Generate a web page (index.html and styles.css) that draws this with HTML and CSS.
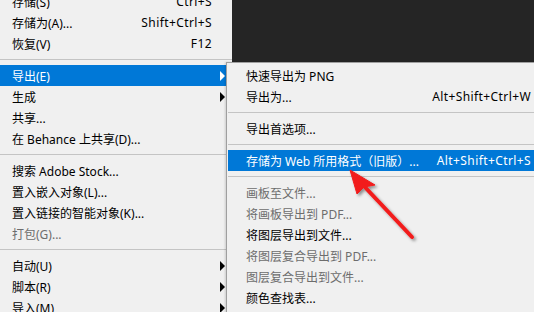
FILE: index.html
```html
<!DOCTYPE html>
<html lang="zh-CN">
<head>
    <meta charset="UTF-8">
    <title>文件菜单 - 导出</title>
    <link rel="stylesheet" href="styles.css">
</head>
<body>
    <div class="screen">
        <ul class="menu main-menu">
            <li class="item"><span class="label">存储(S)</span><span class="key">Ctrl+S</span><span class="sub"></span></li>
            <li class="item"><span class="label">存储为(A)...</span><span class="key">Shift+Ctrl+S</span><span class="sub"></span></li>
            <li class="item"><span class="label">恢复(V)</span><span class="key">F12</span><span class="sub"></span></li>
            <li class="sep"></li>
            <li class="item active"><span class="label">导出(E)</span><span class="key"></span><span class="sub"><i class="tri"></i></span></li>
            <li class="item"><span class="label">生成</span><span class="key"></span><span class="sub"><i class="tri"></i></span></li>
            <li class="item"><span class="label">共享...</span><span class="key"></span><span class="sub"></span></li>
            <li class="item"><span class="label">在 Behance 上共享(D)...</span><span class="key"></span><span class="sub"></span></li>
            <li class="sep"></li>
            <li class="item"><span class="label">搜索 Adobe Stock...</span><span class="key"></span><span class="sub"></span></li>
            <li class="item"><span class="label">置入嵌入对象(L)...</span><span class="key"></span><span class="sub"></span></li>
            <li class="item"><span class="label">置入链接的智能对象(K)...</span><span class="key"></span><span class="sub"></span></li>
            <li class="item disabled"><span class="label">打包(G)...</span><span class="key"></span><span class="sub"></span></li>
            <li class="sep"></li>
            <li class="item"><span class="label">自动(U)</span><span class="key"></span><span class="sub"><i class="tri"></i></span></li>
            <li class="item"><span class="label">脚本(R)</span><span class="key"></span><span class="sub"><i class="tri"></i></span></li>
            <li class="item"><span class="label">导入(M)</span><span class="key"></span><span class="sub"><i class="tri"></i></span></li>
        </ul>

        <ul class="menu sub-menu">
            <li class="item"><span class="label">快速导出为 PNG</span><span class="key"></span></li>
            <li class="item"><span class="label">导出为...</span><span class="key">Alt+Shift+Ctrl+W</span></li>
            <li class="sep"></li>
            <li class="item"><span class="label">导出首选项...</span><span class="key"></span></li>
            <li class="sep"></li>
            <li class="item active"><span class="label">存储为 Web 所用格式（旧版）...</span><span class="key">Alt+Shift+Ctrl+S</span></li>
            <li class="sep"></li>
            <li class="item disabled"><span class="label">画板至文件...</span><span class="key"></span></li>
            <li class="item disabled"><span class="label">将画板导出到 PDF...</span><span class="key"></span></li>
            <li class="item"><span class="label">将图层导出到文件...</span><span class="key"></span></li>
            <li class="item disabled"><span class="label">将图层复合导出到 PDF...</span><span class="key"></span></li>
            <li class="item disabled"><span class="label">图层复合导出到文件...</span><span class="key"></span></li>
            <li class="item"><span class="label">颜色查找表...</span><span class="key"></span></li>
        </ul>

        <svg class="pointer" width="534" height="312" viewBox="0 0 534 312">
            <defs>
                <filter id="shadow" x="-20%" y="-20%" width="150%" height="150%">
                    <feDropShadow dx="2" dy="2" stdDeviation="1.5" flood-color="#000" flood-opacity="0.4"/>
                </filter>
            </defs>
            <g filter="url(#shadow)" fill="#f21b1b" stroke="#f21b1b">
                <line x1="412" y1="237" x2="362" y2="184" stroke-width="4" stroke-linecap="round"/>
                <polygon points="350,170 357,194 364,187 375,185" stroke-width="1" stroke-linejoin="round"/>
            </g>
        </svg>
    </div>
</body>
</html>
```

FILE: styles.css
```css
body {
    margin: 0;
    padding: 0;
    background-color: #252525;
    font-family: "Noto Sans", "Noto Sans CJK SC", sans-serif;
    font-size: 12px;
    color: #000;
    overflow: hidden;
}
.screen {
    position: relative;
    width: 534px;
    height: 312px;
    overflow: hidden;
}
.menu {
    list-style: none;
    margin: 0;
    padding: 0;
    background-color: #f0f0f0;
}
.main-menu {
    width: 232px;
    height: 330px;
    margin-top: -9px;
}
.item {
    display: flex;
    align-items: center;
    height: 21px;
    white-space: nowrap;
}
.item .label {
    flex: 1;
}
.item .key {
    text-align: right;
    letter-spacing: 0.4px;
}
.item.active {
    background-color: #0078d7;
    color: #fff;
}
.item.disabled {
    color: #6d6d6d;
}
.sep {
    height: 1px;
    margin: 5px 0;
    background-color: #c4c4c4;
}
.main-menu .sep:first-of-type {
    margin: 6px 0 4px;
}
.main-menu .item {
    padding-left: 12px;
}
.main-menu .sub {
    width: 20px;
    height: 21px;
    display: flex;
    align-items: center;
}
.tri {
    display: block;
    margin-left: 8px;
    width: 0;
    height: 0;
    border-left: 5px solid #000;
    border-top: 5px solid transparent;
    border-bottom: 5px solid transparent;
}
.active .tri {
    border-left-color: #fff;
}
/* popup submenu over the main menu */
.sub-menu {
    position: absolute;
    left: 226px;
    top: 62px;
    width: 323px;
    height: 260px;
    padding: 2px 1px 0 1px;
    border-top: 1px solid #9f9f9f;
    border-left: 1px solid #9f9f9f;
    box-shadow: -1px 0 2px rgba(0, 0, 0, 0.15);
}
.sub-menu .item {
    padding: 0 20px 0 18px;
}
.pointer {
    position: absolute;
    left: 0;
    top: 0;
}
```
